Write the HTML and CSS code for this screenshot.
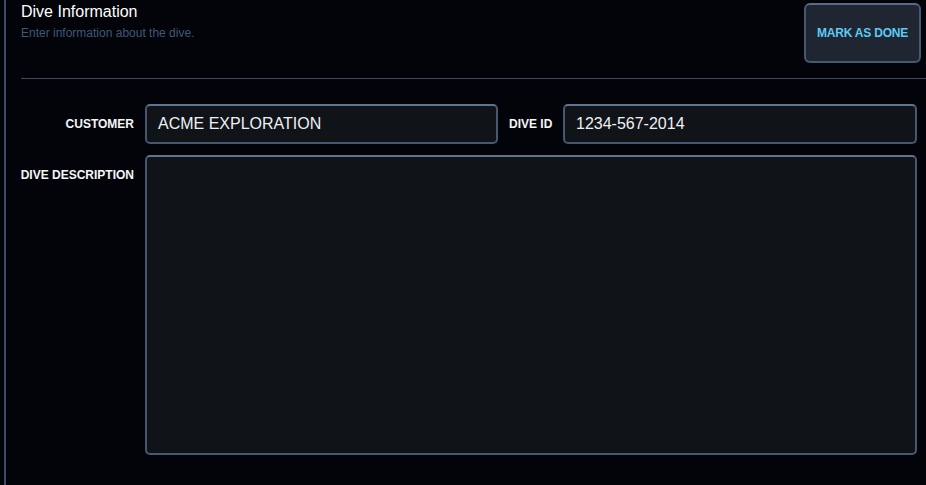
FILE: index.html
```html
<!DOCTYPE html>
<html>
<head>
<meta charset="utf-8">
<link rel="stylesheet" href="styles.css">
</head>
<body>
<div class="panel">
  <div class="header">
    <div class="titles">
      <div class="title">Dive Information</div>
      <div class="subtitle">Enter information about the dive.</div>
    </div>
    <button class="done-btn">MARK AS DONE</button>
  </div>
  <div class="rule"></div>
  <div class="form">
    <label class="label">CUSTOMER</label>
    <div class="field">ACME EXPLORATION</div>
    <label class="label">DIVE ID</label>
    <div class="field">1234-567-2014</div>
    <label class="label label-wide">DIVE DESCRIPTION</label>
    <div class="field area"></div>
  </div>
</div>
</body>
</html>
```
FILE: styles.css
```css
html, body {
  margin: 0;
  padding: 0;
  background: #030409;
  height: 100%;
}
body {
  font-family: "Liberation Sans", Arial, sans-serif;
  color: #ffffff;
  overflow: hidden;
}
.panel {
  margin-left: 4px;
  border-left: 2px solid #3c4c63;
  padding-left: 15px;
  height: 485px;
  box-sizing: border-box;
}
.header {
  display: flex;
  justify-content: space-between;
  align-items: flex-start;
  padding-top: 3px;
  padding-right: 5px;
}
.titles {
  display: flex;
  flex-direction: column;
}
.title {
  font-size: 16px;
  line-height: 18px;
  color: #ffffff;
}
.subtitle {
  margin-top: 5px;
  font-size: 12px;
  line-height: 14px;
  color: #3d5978;
}
.done-btn {
  width: 117px;
  height: 60px;
  box-sizing: border-box;
  background: #1f2631;
  border: 2px solid #465870;
  border-top-color: #566b86;
  border-radius: 6px;
  font-family: "Liberation Sans", Arial, sans-serif;
  font-weight: bold;
  font-size: 12px;
  letter-spacing: -0.2px;
  color: #5ccaf5;
  padding: 0;
}
.rule {
  margin-top: 15px;
  height: 1px;
  background: #3a4b64;
}
.form {
  margin-top: 25px;
  display: grid;
  grid-template-columns: 113px 353px 43px 354px;
  column-gap: 11px;
  row-gap: 11px;
}
.label {
  font-size: 12px;
  font-weight: bold;
  line-height: 40px;
  text-align: right;
  white-space: nowrap;
  color: #f4f6f8;
}
.label-wide {
  margin-left: -6px;
  align-self: start;
}
.field {
  height: 40px;
  box-sizing: border-box;
  background: #101318;
  border: 2px solid #46586f;
  border-top-color: #5d7591;
  border-radius: 5px;
  padding: 0 11px;
  font-size: 16px;
  line-height: 36px;
  color: #eef1f4;
}
.area {
  grid-column: 2 / 5;
  height: 300px;
}
```
